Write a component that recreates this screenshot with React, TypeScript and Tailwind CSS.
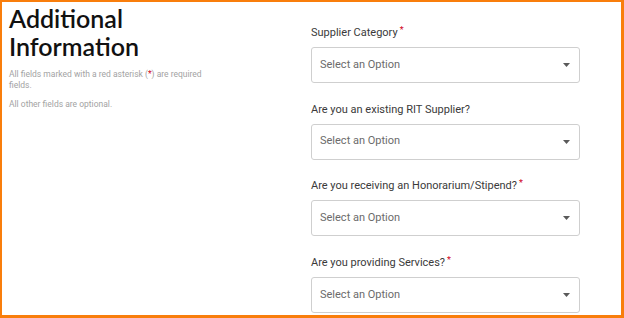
const fields = [
  { label: 'Supplier Category', required: true },
  { label: 'Are you an existing RIT Supplier?', required: false },
  { label: 'Are you receiving an Honorarium/Stipend?', required: true },
  { label: 'Are you providing Services?', required: true },
];

function SelectField({ label, required }: { label: string; required: boolean }) {
  return (
    <div className="flex flex-col">
      <label className="h-[13px] text-[11px] leading-[13px] text-[#3a3a3a]">
        {label}
        {required && <span className="ml-[2px] align-top text-[9px] leading-[9px] text-[#d0021b]">*</span>}
      </label>
      <div className="mt-[8px] flex h-[36px] w-[269px] items-center justify-between rounded-[3px] border border-[#cfcfcf] bg-white pl-[8px] pr-[9px]">
        <span className="text-[11px] text-[#6b6b6b]">Select an Option</span>
        <svg width="7" height="4" viewBox="0 0 7 4" className="fill-[#5a5a5a]">
          <path d="M0 0h7L3.5 4z" />
        </svg>
      </div>
    </div>
  );
}

export default function App() {
  return (
    <div className="h-[318px] w-[624px] overflow-hidden border-t-2 border-r-[3px] border-b-[3px] border-l-2 border-[#f97e0c] bg-white">
      <div className="flex h-full">
        <div className="w-[309px] pl-[7px] pt-[2px]" style={{ fontFamily: 'Lato, sans-serif' }}>
          <h1 className="text-[25px] leading-[28px] font-semibold text-[#111]">
            Additional
            <br />
            Information
          </h1>
          <p className="mt-[9px] w-[212px] text-[8.5px] leading-[11px] text-[#a3a3a3]" style={{ fontFamily: 'Roboto, sans-serif' }}>
            All fields marked with a red asterisk (<span className="text-[#d0021b]">*</span>) are required fields.
          </p>
          <p className="mt-[8px] text-[8.5px] leading-[11px] text-[#a3a3a3]" style={{ fontFamily: 'Roboto, sans-serif' }}>
            All other fields are optional.
          </p>
        </div>
        <div className="flex flex-col gap-[19.7px] pt-[24px]" style={{ fontFamily: 'Roboto, sans-serif' }}>
          {fields.map((f) => (
            <SelectField key={f.label} label={f.label} required={f.required} />
          ))}
        </div>
      </div>
    </div>
  );
}
